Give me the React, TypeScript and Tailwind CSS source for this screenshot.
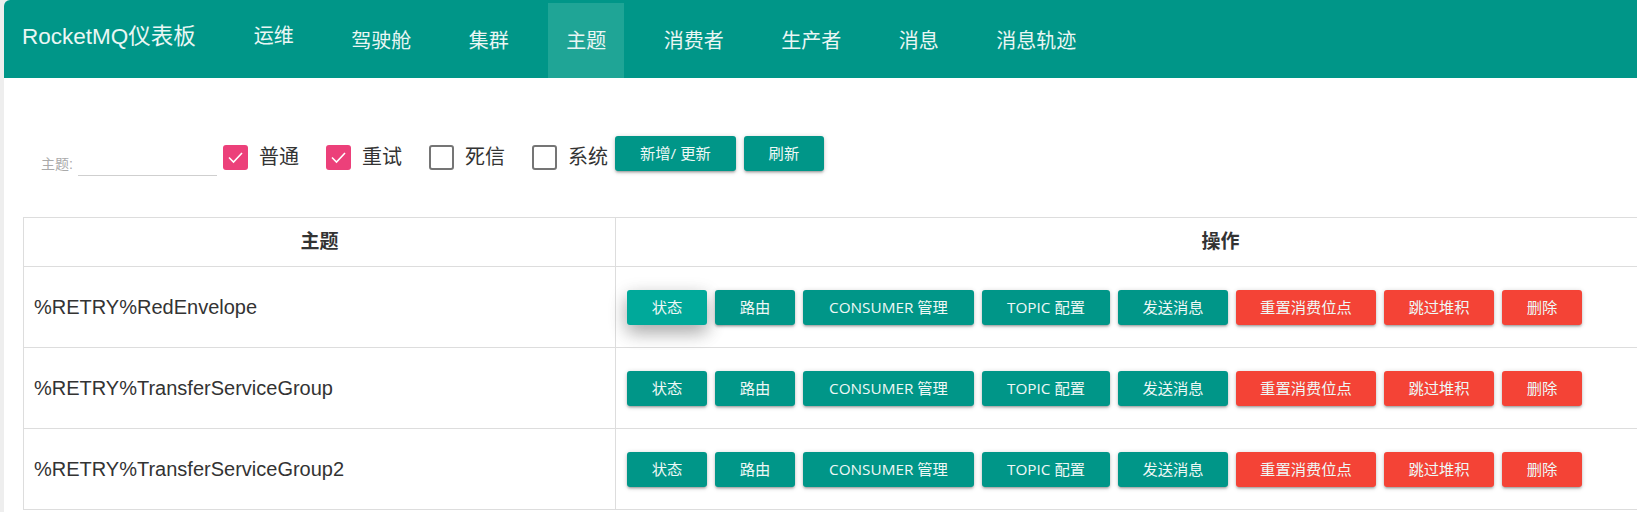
import React from 'react';

type Btn = { label: string; w: number; tone: 'teal' | 'red' };

const navItems = ['运维', '驾驶舱', '集群', '主题', '消费者', '生产者', '消息', '消息轨迹'];

const actions: Btn[] = [
  { label: '状态', w: 80, tone: 'teal' },
  { label: '路由', w: 80, tone: 'teal' },
  { label: 'CONSUMER 管理', w: 171, tone: 'teal' },
  { label: 'TOPIC 配置', w: 128, tone: 'teal' },
  { label: '发送消息', w: 110, tone: 'teal' },
  { label: '重置消费位点', w: 140, tone: 'red' },
  { label: '跳过堆积', w: 110, tone: 'red' },
  { label: '删除', w: 80, tone: 'red' },
];

const topics = ['%RETRY%RedEnvelope', '%RETRY%TransferServiceGroup', '%RETRY%TransferServiceGroup2'];

const filters = [
  { label: '普通', checked: true },
  { label: '重试', checked: true },
  { label: '死信', checked: false },
  { label: '系统', checked: false },
];

const cjk = { fontFamily: '"Liberation Sans", "Noto Sans CJK SC", sans-serif' };
const btnFont = { fontFamily: '"Open Sans", "Noto Sans CJK SC", sans-serif' };

const Checkbox: React.FC<{ checked: boolean }> = ({ checked }) =>
  checked ? (
    <span className="flex h-[25px] w-[25px] items-center justify-center rounded-[3px] bg-[#ec407a]">
      <svg width="17" height="13" viewBox="0 0 17 13" fill="none">
        <polyline points="2,6.5 6.5,11 15,2" stroke="#fff" strokeWidth="1.6" />
      </svg>
    </span>
  ) : (
    <span className="h-[25px] w-[25px] rounded-[3px] border-2 border-[#757575] bg-white" />
  );

const ActionButton: React.FC<{ btn: Btn; hover?: boolean }> = ({ btn, hover }) => {
  const bg = btn.tone === 'red' ? 'bg-[#f44336]' : hover ? 'bg-[#00a99a]' : 'bg-[#009688]';
  const shadow = hover
    ? 'shadow-[0_8px_17px_0_rgba(0,0,0,0.2),0_6px_20px_0_rgba(0,0,0,0.19)]'
    : 'shadow-[0_2px_2px_0_rgba(0,0,0,0.14),0_3px_1px_-2px_rgba(0,0,0,0.12),0_1px_5px_0_rgba(0,0,0,0.2)]';
  return (
    <button
      className={`flex h-[35px] shrink-0 items-center justify-center rounded-[3px] text-[15.3px] text-[#eef8f6] ${bg} ${shadow}`}
      style={{ ...btnFont, width: btn.w }}
    >
      {btn.label}
    </button>
  );
};

const App: React.FC = () => {
  return (
    <div className="h-[512px] w-[1637px] overflow-hidden bg-[#eeeeee] pl-[4px]" style={cjk}>
      <div className="h-full overflow-hidden rounded-tl-[6px] bg-white">
        {/* Header */}
        <header className="flex h-[78px] items-stretch bg-[#009688] pt-[3px] text-[#eaf6f4]">
          <div className="flex items-center pb-[8px] pl-[18px] text-[22.5px]">RocketMQ仪表板</div>
          <nav className="ml-[40px] flex items-stretch gap-[21.5px]">
            {navItems.map((item, i) => (
              <a
                key={item}
                className={`flex items-center px-[18px] text-[20px] ${item === '主题' ? 'bg-[#1fa596]' : ''} ${
                  i === 0 ? 'pb-[9px]' : ''
                }`}
              >
                {item}
              </a>
            ))}
          </nav>
        </header>

        <div className="px-[19px] pt-[58px]">
          {/* Filters */}
          <div className="flex items-start">
            <div className="flex h-[40px] items-end pl-[18px]">
              <span className="mb-[5px] text-[14px] leading-none text-[#aaaaaa]">主题:</span>
              <div className="ml-[5px] h-[26px] w-[139px] border-b border-[#cfcfcf]" />
            </div>
            <div className="ml-[6px] mt-[6px] flex items-center">
              {filters.map((f, i) => (
                <label key={f.label} className={`flex items-center ${i > 0 ? 'ml-[27px]' : ''}`}>
                  <Checkbox checked={f.checked} />
                  <span className="ml-[11px] text-[20px] text-[#333]">{f.label}</span>
                </label>
              ))}
            </div>
            <div className="ml-[7px] flex gap-[8px]">
              <ActionButton btn={{ label: '新增/ 更新', w: 121, tone: 'teal' }} />
              <ActionButton btn={{ label: '刷新', w: 80, tone: 'teal' }} />
            </div>
          </div>

          {/* Table */}
          <table className="mt-[41px] w-[1802px] table-fixed border-collapse">
            <colgroup>
              <col className="w-[592px]" />
              <col className="w-[1210px]" />
            </colgroup>
            <thead>
              <tr className="h-[49px]">
                <th className="border border-[#dddddd] text-center text-[19px] font-bold text-[#333]">主题</th>
                <th className="border border-[#dddddd] text-center text-[19px] font-bold text-[#333]">操作</th>
              </tr>
            </thead>
            <tbody>
              {topics.map((t, r) => (
                <tr key={t} className="h-[81px]">
                  <td className="border border-[#dddddd] pl-[10px] text-[20px] text-[#333]">{t}</td>
                  <td className="border border-[#dddddd] pl-[11px]">
                    <div className="flex gap-[8px]">
                      {actions.map((b, i) => (
                        <ActionButton key={b.label} btn={b} hover={r === 0 && i === 0} />
                      ))}
                    </div>
                  </td>
                </tr>
              ))}
            </tbody>
          </table>
        </div>
      </div>
    </div>
  );
};

export default App;
